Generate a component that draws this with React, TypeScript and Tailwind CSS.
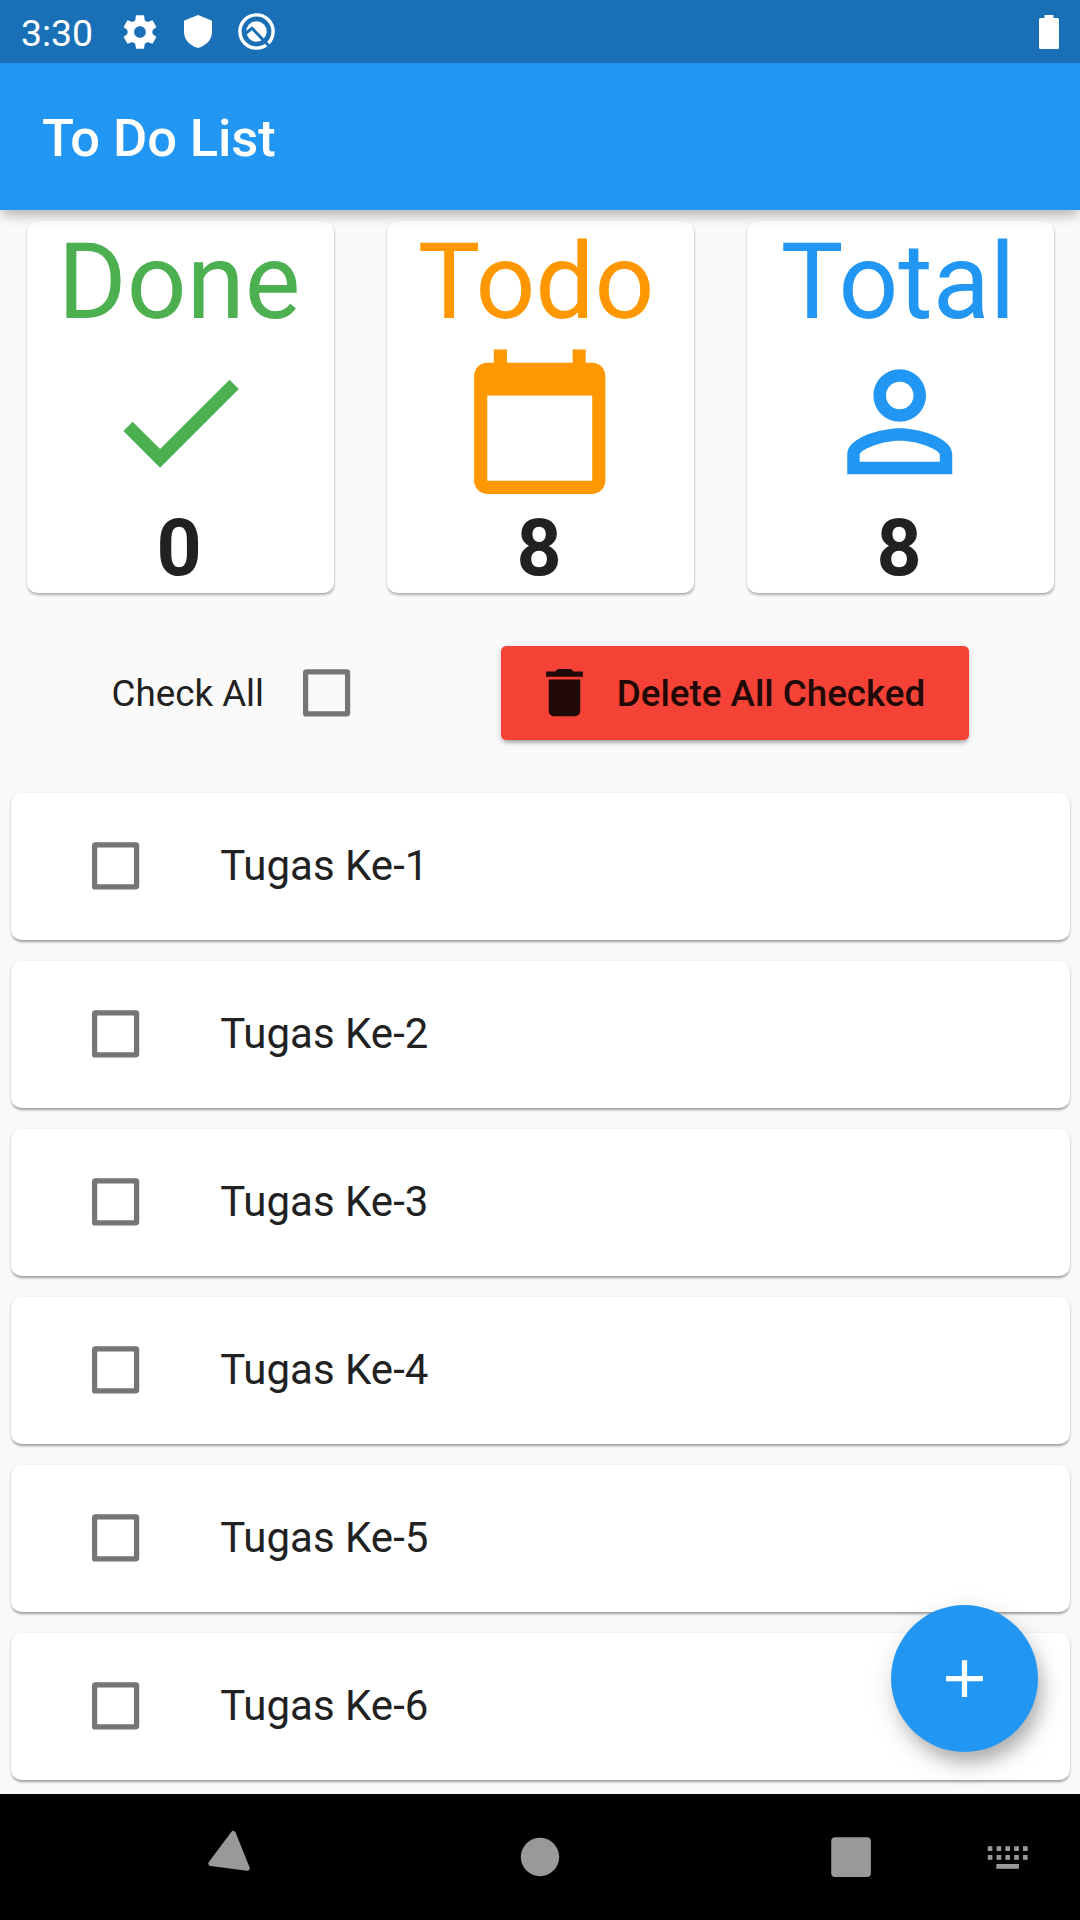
import React from "react";

const stats = [
  {
    title: "Done",
    value: 0,
    tone: "text-[#4caf50]",
    nudge: "mr-[2px]",
    icon: "M9 16.17 4.83 12l-1.42 1.41L9 19 21 7l-1.41-1.41z",
  },
  {
    title: "Todo",
    value: 8,
    tone: "text-[#ff9800]",
    nudge: "mr-[8px]",
    icon: "M20 3h-1V1h-2v2H7V1H5v2H4c-1.1 0-2 .9-2 2v16c0 1.1.9 2 2 2h16c1.1 0 2-.9 2-2V5c0-1.1-.9-2-2-2zm0 18H4V8h16v13z",
  },
  {
    title: "Total",
    value: 8,
    tone: "text-[#2196f3]",
    nudge: "mr-[4px]",
    icon: "M12 5.9c1.16 0 2.1.94 2.1 2.1s-.94 2.1-2.1 2.1S9.900 9.160 9.900 8s.94-2.100 2.100-2.100m0 9c2.970 0 6.100 1.460 6.100 2.100v1.100H5.900V17c0-.64 3.130-2.100 6.100-2.100M12 4C9.790 4 8 5.790 8 8s1.790 4 4 4 4-1.790 4-4-1.790-4-4-4zm0 9c-2.670 0-8 1.340-8 4v3h16v-3c0-2.660-5.330-4-8-4z",
  },
];

const tasks = ["Tugas Ke-1", "Tugas Ke-2", "Tugas Ke-3", "Tugas Ke-4", "Tugas Ke-5", "Tugas Ke-6"];

function Icon({ d, className }: { d: string; className: string }) {
  return (
    <svg viewBox="0 0 24 24" fill="currentColor" className={className}>
      <path d={d} />
    </svg>
  );
}

function Checkbox() {
  return (
    <svg viewBox="0 0 48 48" className="size-[48px] shrink-0">
      <rect x="2.600" y="2.900" width="42" height="42" rx="0.800" fill="none" stroke="#757575" strokeWidth="5.250" strokeLinejoin="round" />
    </svg>
  );
}

function StatusBar() {
  return (
    <div className="flex h-[63px] items-center bg-[#1a70b7] pl-[21px] pr-[21px] text-white">
      <span className="w-[99px] pt-[3px] text-[37.400px] leading-[43px]">3:30</span>
      <Icon
        className="size-[40px]"
        d="M19.430 12.980c.04-.32.07-.64.07-.98s-.03-.66-.07-.98l2.110-1.650c.19-.15.24-.42.12-.64l-2-3.460c-.12-.22-.39-.3-.61-.22l-2.490 1c-.52-.4-1.080-.73-1.690-.98l-.38-2.650C14.460 2.180 14.250 2 14 2h-4c-.25 0-.46.18-.49.42l-.38 2.650c-.61.25-1.170.59-1.690.98l-2.490-1c-.23-.09-.49 0-.61.22l-2 3.460c-.13.22-.07.49.12.64l2.110 1.650c-.04.32-.07.65-.07.98s.03.66.07.98l-2.110 1.650c-.19.15-.24.42-.12.64l2 3.460c.12.22.39.3.61.22l2.490-1c.52.4 1.080.73 1.690.98l.38 2.650c.03.24.24.42.49.42h4c.25 0 .46-.18.49-.42l.38-2.650c.61-.25 1.170-.59 1.690-.98l2.490 1c.23.09.49 0 .61-.22l2-3.460c.12-.22.07-.49-.12-.64l-2.110-1.650zM12 15.500c-1.930 0-3.500-1.570-3.500-3.500s1.570-3.500 3.500-3.500 3.500 1.570 3.500 3.500-1.570 3.500-3.500 3.500z"
      />
      <svg viewBox="0 0 28 33" className="ml-[24px] h-[33px] w-[28px]" fill="#fff">
        <path d="M14 0 27 5.200Q28 5.600 28 6.800V17c0 7.500-5.500 13.500-14 16C5.500 30.500 0 24.500 0 17V6.800Q0 5.600 1 5.200z" />
      </svg>
      <svg viewBox="0 0 37 37" className="ml-[25.500px] size-[37px]" fill="none">
        <circle cx="18.500" cy="18.500" r="16.600" stroke="#fff" strokeWidth="3.400" />
        <circle cx="18.500" cy="18.500" r="10.200" fill="#fff" />
        <path d="M7.500 20.500 14 15.300 32 34" stroke="#1a70b7" strokeWidth="2.900" />
      </svg>
      <svg viewBox="0 0 20 34" className="ml-auto h-[34px] w-[20px]" fill="#fff">
        <path d="M5.500 0h9v3H18.500Q20 3 20 4.500v28Q20 34 18.500 34h-17Q0 34 0 32.500v-28Q0 3 1.500 3h4z" />
      </svg>
    </div>
  );
}

function NavigationBar() {
  return (
    <div className="relative z-20 h-[126px] shrink-0 bg-black">
      <svg viewBox="0 0 1080 126" className="h-[126px] w-[1080px]" fill="#999">
        <path d="M233.300 39.500 247.200 74.200 210.800 69.400z" stroke="#999" strokeWidth="5" strokeLinejoin="round" />
        <circle cx="540" cy="63" r="19.200" />
        <rect x="831.200" y="43.200" width="39.700" height="39.700" rx="4" />
        {[987.8, 996.6, 1005.4, 1014.2, 1023.0].map((x) => (
          <g key={x}>
            <rect x={x} y="52.200" width="4.600" height="4.800" />
            <rect x={x} y="61" width="4.600" height="4.800" />
          </g>
        ))}
        <rect x="996.300" y="70" width="22.600" height="4.800" />
      </svg>
    </div>
  );
}

export default function App() {
  return (
    <div className="flex h-[1920px] w-[1080px] flex-col overflow-hidden bg-[#fafafa] font-['Roboto',sans-serif] text-[#212121]">
      <header className="relative z-10 shrink-0 shadow-[0_9px_12px_-3px_rgba(0,0,0,0.2),0_4px_10px_0_rgba(0,0,0,0.1)]">
        <StatusBar />
        <div className="flex h-[147px] items-center bg-[#2196f3] pl-[42px] pt-[2px]">
          <h1 className="text-[52.500px] font-medium leading-[62px] tracking-[-0.1px] text-white">To Do List</h1>
        </div>
      </header>

      <main className="relative grow overflow-hidden">
        <section className="grid grid-cols-3 pt-[10.500px]">
          {stats.map((s) => (
            <article
              key={s.title}
              className="ml-[26.600px] flex h-[372.500px] w-[307px] flex-col items-center rounded-[10.500px] bg-white shadow-[0.500px_2.600px_3px_-1px_rgba(0,0,0,0.25),0_1px_3px_0_rgba(0,0,0,0.13)]"
            >
              <h2 className={`text-[105px] leading-[123px] ${s.nudge} ${s.tone}`}>{s.title}</h2>
              <Icon d={s.icon} className={`-mt-[0.500px] size-[157.500px] shrink-0 ${s.tone}`} />
              <p className="mr-[2px] pt-[1px] text-[78.750px] font-bold leading-[92px]">{s.value}</p>
            </article>
          ))}
        </section>

        <section className="mt-[52.500px] flex h-[94.500px] items-center">
          <div className="ml-[111.500px] w-[191.500px] pt-[2px] text-[36.750px] leading-[43px]">Check All</div>
          <Checkbox />
          <button className="ml-[150.250px] flex h-[94.500px] w-[467.500px] items-center rounded-[5.250px] bg-[#f44336] pl-[31.500px] text-[#210907] shadow-[0_5px_4px_-3px_rgba(0,0,0,0.25),0_2px_6px_0_rgba(0,0,0,0.2)]">
            <Icon className="size-[63px] shrink-0" d="M6 19c0 1.100.9 2 2 2h8c1.100 0 2-.9 2-2V7H6v12zM19 4h-3.500l-1-1h-5l-1 1H5v2h14V4z" />
            <span className="ml-[21px] whitespace-nowrap pt-[2px] text-[36.750px] font-medium leading-[43px]">Delete All Checked</span>
          </button>
        </section>

        <ul className="mt-[52.500px] flex flex-col gap-[21px] px-[10.500px]">
          {tasks.map((t) => (
            <li
              key={t}
              className="flex h-[147px] items-center rounded-[10.500px] bg-white pl-[81.500px] shadow-[0_3px_3px_-1px_rgba(0,0,0,0.3),0_1px_3px_0_rgba(0,0,0,0.18)]"
            >
              <Checkbox />
              <span className="ml-[80.250px] pb-[2px] text-[42px] leading-[49px]">{t}</span>
            </li>
          ))}
        </ul>

        <button className="absolute bottom-[42px] right-[42px] flex size-[147px] items-center justify-center rounded-full bg-[#2196f3] text-white shadow-[6px_13px_16px_-3px_rgba(0,0,0,0.2),3px_10px_28px_0_rgba(0,0,0,0.17)]">
          <Icon className="size-[63px]" d="M19 13h-6v6h-2v-6H5v-2h6V5h2v6h6v2z" />
        </button>
      </main>

      <NavigationBar />
    </div>
  );
}
